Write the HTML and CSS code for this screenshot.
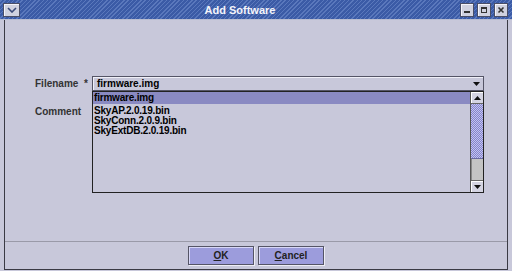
FILE: index.html
```html
<!DOCTYPE html>
<html lang="en">
<head>
  <meta charset="UTF-8">
  <title>Add Software</title>
  <link rel="stylesheet" href="styles.css">
</head>
<body>
  <div class="window">
    <div class="titlebar">
      <span class="tb-btn menu-btn">
        <svg width="10" height="6" viewBox="0 0 10 6"><path d="M1 1 L5 5 L9 1" fill="none" stroke="#3a4a78" stroke-width="1.6"/></svg>
      </span>
      <span class="title">Add Software</span>
      <span class="tb-ctrls">
        <span class="tb-btn"><svg width="8" height="8" viewBox="0 0 8 8"><rect x="1" y="5" width="6" height="2" fill="#333"/></svg></span>
        <span class="tb-btn"><svg width="8" height="8" viewBox="0 0 8 8"><rect x="1.5" y="1.5" width="5" height="5" fill="none" stroke="#333"/><rect x="1" y="1" width="6" height="2" fill="#333"/></svg></span>
        <span class="tb-btn"><svg width="8" height="8" viewBox="0 0 8 8"><path d="M1.5 1.5 L6.5 6.5 M6.5 1.5 L1.5 6.5" stroke="#333" stroke-width="1.6"/></svg></span>
      </span>
    </div>
    <div class="frame">
      <div class="form">
        <div class="row">
          <label class="label">Filename &nbsp;*</label>
          <div class="combo">
            <span class="combo-text">firmware.img</span>
            <svg class="combo-arrow" width="7" height="4" viewBox="0 0 7 4"><path d="M0 0 H7 L3.5 4 Z" fill="#111"/></svg>
            <div class="popup">
              <ul class="items">
                <li class="item selected">firmware.img</li>
                <li class="item">SkyAP.2.0.19.bin</li>
                <li class="item">SkyConn.2.0.9.bin</li>
                <li class="item">SkyExtDB.2.0.19.bin</li>
              </ul>
              <div class="scrollbar">
                <div class="sb-btn"><svg width="7" height="4" viewBox="0 0 7 4"><path d="M0 4 H7 L3.5 0 Z" fill="#111"/></svg></div>
                <div class="sb-thumb"></div>
                <div class="sb-track"></div>
                <div class="sb-btn"><svg width="7" height="4" viewBox="0 0 7 4"><path d="M0 0 H7 L3.5 4 Z" fill="#111"/></svg></div>
              </div>
            </div>
          </div>
        </div>
        <div class="row row-comment">
          <label class="label">Comment</label>
        </div>
      </div>
      <div class="buttons">
        <button class="btn"><u>O</u>K</button>
        <button class="btn"><u>C</u>ancel</button>
      </div>
    </div>
  </div>
</body>
</html>
```

FILE: styles.css
```css
html, body {
  margin: 0;
  padding: 0;
}
body {
  width: 512px;
  height: 271px;
  overflow: hidden;
  background: #c8c8da;
  font-family: "Liberation Sans", Arial, sans-serif;
  font-size: 10px;
}
.window {
  height: 271px;
  display: flex;
  flex-direction: column;
}
.titlebar {
  height: 19px;
  flex: none;
  display: flex;
  align-items: center;
  padding: 0 4px 0 3px;
  background: repeating-linear-gradient(-45deg, #3b5ba6 0 2px, #5a78bc 2px 3px);
  border-bottom: 1px solid #b8bcd0;
  color: #f4f4fa;
}
.title {
  flex: 1;
  text-align: center;
  font-size: 11px;
  font-weight: bold;
}
.tb-ctrls {
  display: flex;
  gap: 3px;
}
.tb-btn {
  box-sizing: border-box;
  width: 14px;
  height: 14px;
  display: flex;
  align-items: center;
  justify-content: center;
  background: #d0d2e0;
  border: 1px solid #4a4e66;
  box-shadow: inset 1px 1px 0 #f4f4fa;
}
.menu-btn {
  width: 17px;
}
.frame {
  flex: 1;
  display: flex;
  flex-direction: column;
  margin: 0 4px 1px 4px;
  border-left: 1px solid #3a3a44;
  border-right: 1px solid #3a3a44;
  border-bottom: 1px solid #3a3a44;
}
.form {
  flex: 1;
  padding: 56px 23px 0 30px;
}
.row {
  display: flex;
  align-items: center;
  height: 15px;
}
.row-comment {
  margin-top: 15px;
  height: 11px;
}
.label {
  width: 57px;
  flex: none;
  font-weight: bold;
  color: #333;
  white-space: nowrap;
}
.combo {
  position: relative;
  flex: 1;
  box-sizing: border-box;
  height: 15px;
  border: 1px solid #555566;
  box-shadow: inset 1px 1px 0 #f0f0f8;
  display: flex;
  align-items: center;
  padding: 0 3px 0 4px;
}
.combo-text {
  flex: 1;
  font-weight: bold;
  color: #000;
}
.popup {
  position: absolute;
  top: 14px;
  left: -1px;
  right: -1px;
  height: 102px;
  box-sizing: border-box;
  border: 1px solid #222;
  background: #c8c8da;
  display: flex;
}
.items {
  flex: 1;
  list-style: none;
  margin: 0;
  padding: 0;
}
.item {
  height: 10px;
  line-height: 10px;
  padding-left: 1px;
  font-weight: bold;
  letter-spacing: -0.2px;
  color: #000;
}
.item.selected {
  height: 12px;
  line-height: 12px;
  margin-bottom: 2px;
  background: #8a8ac2;
}
.scrollbar {
  width: 12px;
  display: flex;
  flex-direction: column;
  border-left: 1px solid #555;
}
.sb-btn {
  height: 11px;
  display: flex;
  align-items: center;
  justify-content: center;
  background: #d4d4e2;
  box-shadow: inset 1px 1px 0 #fff;
  border-bottom: 1px solid #666;
}
.sb-btn:last-child {
  border-bottom: none;
  border-top: 1px solid #666;
}
.sb-thumb {
  height: 54px;
  background: repeating-conic-gradient(#c4c4f0 0 25%, #8484cc 0 50%) 0 0 / 2px 2px;
  border-bottom: 1px solid #6a6aa0;
}
.sb-track {
  flex: 1;
  background: #c4c4c4;
  border-left: 1px solid #888;
}
.buttons {
  height: 28px;
  flex: none;
  border-top: 1px solid #9a9aa8;
  display: flex;
  justify-content: center;
  gap: 4px;
  padding-top: 4px;
  box-sizing: border-box;
}
.btn {
  width: 66px;
  height: 19px;
  box-sizing: border-box;
  background: #9c9cdc;
  border: 1px solid #555566;
  box-shadow: inset 1px 1px 0 #d8d8f8, 1px 1px 0 #eeeef6;
  font-family: "Liberation Sans", Arial, sans-serif;
  font-size: 10px;
  font-weight: bold;
  color: #222;
  padding: 0;
}
```
